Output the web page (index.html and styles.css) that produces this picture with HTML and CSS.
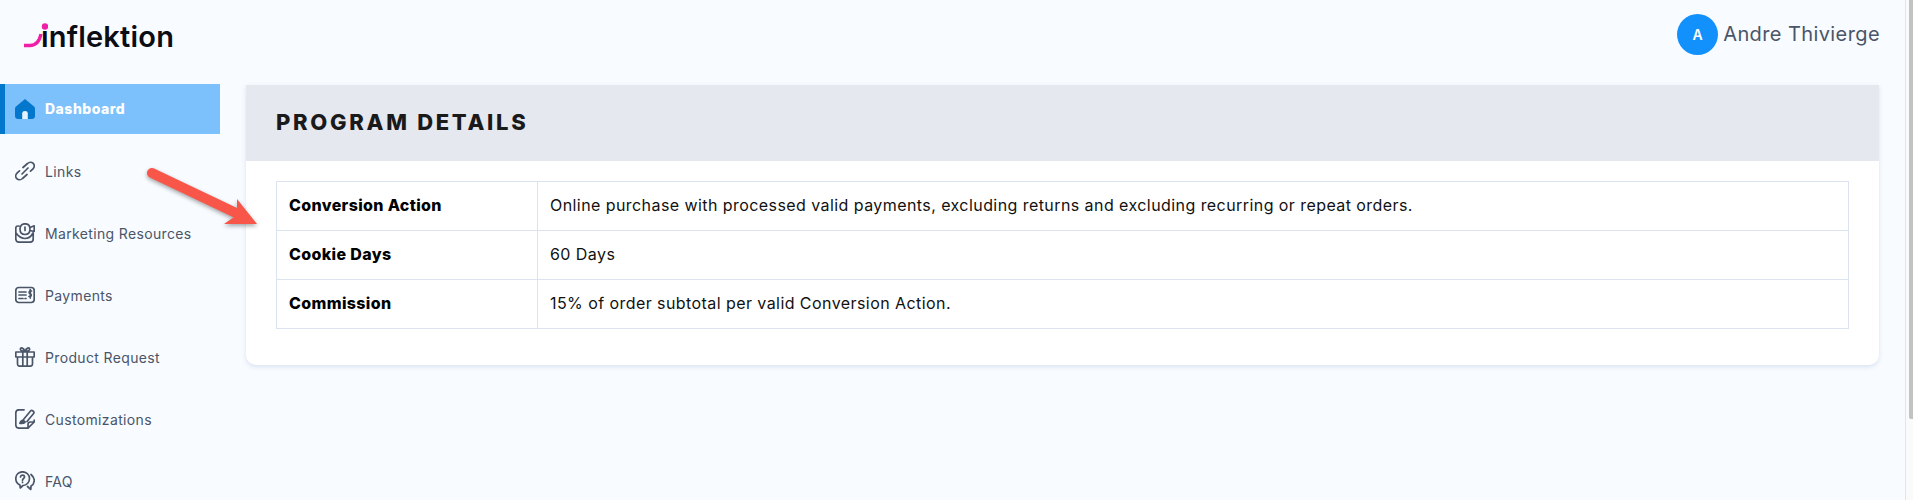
FILE: index.html
```html
<!DOCTYPE html>
<html lang="en">
<head>
    <meta charset="UTF-8">
    <meta name="viewport" content="width=device-width, initial-scale=1.0">
    <title>Program Details</title>
    <link rel="stylesheet" href="styles.css">
</head>
<body>
    <div class="page">
        <div class="content">
            <!-- Top bar -->
            <header class="topbar">
                <div class="logo">
                    <span class="logo-text">inflektion</span>
                    <svg class="logo-swoosh" width="24" height="26" viewBox="0 0 24 26">
                        <circle cx="21" cy="3.5" r="3.2" fill="#f01fa8"/>
                        <path d="M0 22.5 H6 C12 22.5 15.5 18 17 11" fill="none" stroke="#f01fa8" stroke-width="3.4"/>
                    </svg>
                </div>
                <div class="user">
                    <span class="avatar">A</span>
                    <span class="user-name">Andre Thivierge</span>
                </div>
            </header>

            <div class="layout">
                <!-- Sidebar -->
                <nav class="sidebar">
                    <a class="nav-item active">
                        <svg class="nav-icon" viewBox="0 0 20 20">
                            <path d="M10 0 L19 7.5 C19.6 8.1 20 8.8 20 9.5 V17 C20 18.8 18.8 20 17 20 H3 C1.2 20 0 18.8 0 17 V9.5 C0 8.8 .4 8.1 1 7.5 Z" fill="#0277cc"/>
                            <path d="M7.2 20 V14.5 C7.2 12.8 8.4 12 10 12 C11.6 12 12.8 12.8 12.8 14.5 V20 Z" fill="#e6f3ff"/>
                        </svg>
                        Dashboard
                    </a>
                    <a class="nav-item">
                        <svg class="nav-icon" viewBox="0 0 20 20"><path d="M8 6.5 L12.5 2.5 C14.3 .8 16.8 .9 18.2 2.3 C19.7 3.8 19.6 6.2 18 7.8 L15.5 10.2 M12 13.5 L7.5 17.5 C5.7 19.2 3.2 19.1 1.8 17.7 C.3 16.2 .4 13.8 2 12.2 L4.5 9.8 M7 13 L13 7"/></svg>
                        Links
                    </a>
                    <a class="nav-item">
                        <svg class="nav-icon" viewBox="0 0 20 20"><path d="M4 3 H3 C1.6 3 .8 3.8 .8 5 V16 C.8 18 2 19.2 4 19.2 H15 C17 19.2 18.2 18 18.2 16 V10 M1 10 C4 14 7 15.5 10 15.5 C13 15.5 16 14 18 10 M5 6 C5 2.5 7 .8 10 .8 C13 .8 15 2.5 15 6 C15 9.5 13 11.5 10 11.5 C7 11.5 5 9.5 5 6 Z M10 4 V7.5 M15 4.5 L19.2 2.8 V8.5 L15 7.5"/></svg>
                        Marketing Resources
                    </a>
                    <a class="nav-item">
                        <svg class="nav-icon" viewBox="0 0 20 20"><rect x=".8" y="2.5" width="18.4" height="15" rx="3"/><path d="M4 7 H11 M4 10 H11 M4 13.5 H8 M10 13.5 H11 M16.5 6 C14 5.5 13.5 8 15 8.5 C17 9.5 16.5 12 14 11.5 M15.3 4.5 V13"/></svg>
                        Payments
                    </a>
                    <a class="nav-item">
                        <svg class="nav-icon" viewBox="0 0 20 20"><path d="M.8 5 H19.2 V10 H.8 Z M2.5 10 V17 C2.5 18.4 3.4 19.2 4.8 19.2 H15.2 C16.6 19.2 17.5 18.4 17.5 17 V10 M7.8 5 V19.2 M12.2 5 V19.2 M10 4.5 C8.5 .6 5.8 .2 5.4 2 C5.1 3.5 7.5 4.5 10 4.5 C12.5 4.5 14.9 3.5 14.6 2 C14.2 .2 11.5 .6 10 4.5"/></svg>
                        Product Request
                    </a>
                    <a class="nav-item">
                        <svg class="nav-icon" viewBox="0 0 20 20"><path d="M9 .8 H4 C2 .8 .8 2 .8 4 V16 C.8 18 2 19.2 4 19.2 H13 L19.2 13 V11 M13 19.2 V15.5 C13 14 14 13 15.5 13 H19.2 M8.5 10.5 L15.5 2 C16.8 .6 19.8 2.5 18.6 4.5 L12 12.5"/><path d="M4 15 C4.5 11.5 6.5 10.5 8.5 10.5 L11 12.5 C11 15 8.5 15.5 4 15 Z" class="fill"/></svg>
                        Customizations
                    </a>
                    <a class="nav-item">
                        <svg class="nav-icon" viewBox="0 0 20 20"><path d="M7.5 .8 C3.5 .8 .8 3.8 .8 7.5 C.8 10.5 2.5 13 5 14 L5.2 17 L8 14.5 C12 14.5 14.5 11 14.5 7.5 C14.5 3.8 11.5 .8 7.5 .8 Z M5.5 6 C5.5 3.5 9.5 3.5 9.5 6 C9.5 7.5 7.5 7.5 7.5 9.2 M7.5 11 V11.4 M16 3.5 C18.3 5.5 19.5 7.5 19.2 10 C19 12.5 17.8 14 16 15 L15.8 18.5 L12.5 15.5"/></svg>
                        FAQ
                    </a>
                </nav>

                <!-- Main -->
                <main class="main">
                    <section class="card">
                        <h2 class="card-title">PROGRAM DETAILS</h2>
                        <div class="card-body">
                            <table class="details">
                                <tr>
                                    <th>Conversion Action</th>
                                    <td>Online purchase with processed valid payments, excluding returns and excluding recurring or repeat orders.</td>
                                </tr>
                                <tr>
                                    <th>Cookie Days</th>
                                    <td>60 Days</td>
                                </tr>
                                <tr>
                                    <th>Commission</th>
                                    <td>15% of order subtotal per valid Conversion Action.</td>
                                </tr>
                            </table>
                        </div>
                    </section>
                </main>
            </div>

            <!-- Annotation arrow -->
            <svg class="arrow" width="124" height="72" viewBox="0 0 124 72">
                <path d="M7 7 L91 47" fill="none" stroke="#f9564a" stroke-width="10" stroke-linecap="round"/>
                <path d="M92 33 L112 58 L79 58 L92 49 Z" fill="#f9564a"/>
            </svg>
        </div>
        <div class="scrollbar">
            <div class="scrollbar-thumb"></div>
        </div>
    </div>
</body>
</html>
```

FILE: styles.css
```css
* {
    box-sizing: border-box;
}

html, body {
    height: 100%;
}

body {
    margin: 0;
    overflow: hidden;
    background-color: #f8fbff;
    font-family: Inter, "Liberation Sans", sans-serif;
    color: #4a5568;
}

.page {
    display: flex;
    height: 500px;
}

.content {
    position: relative;
    flex: 1;
    min-width: 0;
    overflow: hidden;
}

.scrollbar {
    width: 8px;
    border-left: 1px solid #e4e4e4;
    background: #fafafa;
}

.scrollbar-thumb {
    width: 4px;
    height: 419px;
    margin-left: auto;
    border-radius: 0 0 0 2px;
    background: #c2c2c2;
}

/* Top bar */
.topbar {
    display: flex;
    align-items: center;
    justify-content: space-between;
    height: 84px;
    padding: 0 25px 16px 24px;
}

.logo {
    position: relative;
    display: flex;
    padding: 6px 0 0 17px;
}

.logo-swoosh {
    position: absolute;
    left: 0;
    top: 9px;
}

.logo-text {
    font-size: 29px;
    font-weight: 600;
    color: #0c0c14;
    line-height: 34px;
    letter-spacing: 0.2px;
}

.user {
    display: flex;
    align-items: center;
    gap: 5px;
}

.avatar {
    display: flex;
    align-items: center;
    justify-content: center;
    width: 41px;
    height: 41px;
    border-radius: 50%;
    background-color: #1291fd;
    color: #fff;
    font-size: 14px;
    font-weight: 600;
}

.user-name {
    font-size: 20px;
    letter-spacing: 0.4px;
}

/* Sidebar */
.layout {
    display: flex;
}

.sidebar {
    flex: 0 0 220px;
    width: 220px;
}

.nav-item {
    display: flex;
    align-items: center;
    gap: 10px;
    height: 50px;
    margin-bottom: 12px;
    padding-left: 15px;
    font-size: 14px;
    letter-spacing: 0.35px;
    color: #4a5568;
}

.nav-item.active {
    padding: 0 0 1px 10px;
    border-left: 5px solid #0277cc;
    background-color: #7dc1fc;
    color: #fff;
    font-weight: 800;
    letter-spacing: 0.5px;
}

.nav-icon {
    width: 20px;
    height: 20px;
    flex: none;
    fill: none;
    stroke: #4a5568;
    stroke-width: 1.7;
    stroke-linecap: round;
    stroke-linejoin: round;
}

.nav-icon .fill {
    fill: #4a5568;
    stroke: none;
}

.active .nav-icon {
    stroke: none;
}

/* Main */
.main {
    flex: 1;
    padding: 1px 26px 0;
}

.card {
    background: #fff;
    border-radius: 0 0 10px 10px;
    box-shadow: 0 2px 4px rgba(130, 160, 200, 0.25);
}

.card-title {
    margin: 0;
    height: 76px;
    padding-left: 30px;
    background-color: #e5e8ef;
    color: #1a1a1a;
    font-size: 22px;
    font-weight: 800;
    line-height: 74px;
    letter-spacing: 2.7px;
}

.card-body {
    padding: 20px 30px 36px;
}

.details {
    width: 100%;
    border-collapse: collapse;
    font-size: 16px;
    color: #111;
    letter-spacing: 0.43px;
}

.details th,
.details td {
    height: 49px;
    padding: 0 12px 2px;
    border: 1px solid #dbe3f0;
    text-align: left;
}

.details th {
    width: 261px;
    font-weight: 800;
    color: #000;
    letter-spacing: 0.35px;
}

/* Annotation */
.arrow {
    position: absolute;
    left: 145px;
    top: 166px;
    filter: drop-shadow(0 2px 2px rgba(0, 0, 0, 0.35));
}
```
